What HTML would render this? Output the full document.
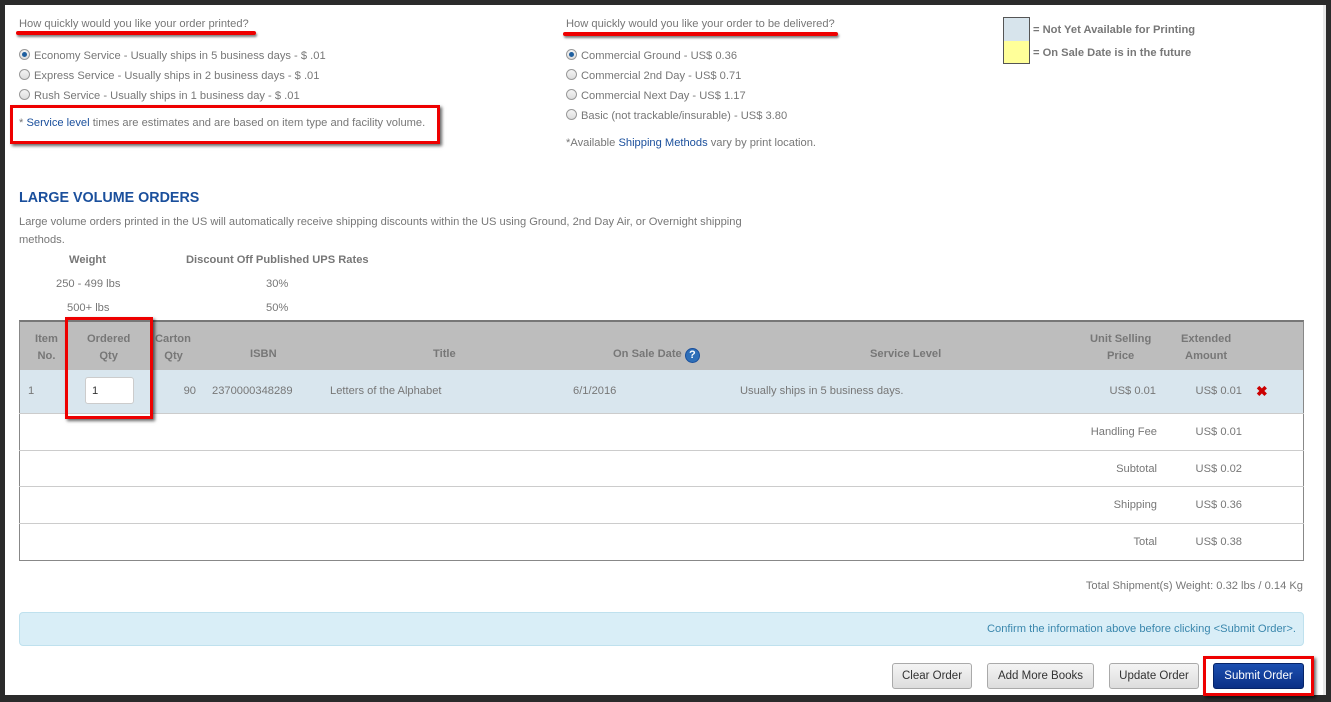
<!DOCTYPE html>
<html><head><meta charset="utf-8"><style>
*{margin:0;padding:0;box-sizing:border-box}
body{width:1331px;height:702px;background:#2b2b2b;position:relative;overflow:hidden;font-family:"Liberation Sans",Arial,sans-serif;font-size:11.15px;color:#777}
#pg{position:absolute;left:5px;top:5px;width:1318px;height:690px;background:#fff}
#strip{position:absolute;left:1323px;top:5px;width:3px;height:690px;background:#e8e8e8}
.a{position:absolute;white-space:nowrap}
.t{margin-top:1px}
.rr{position:absolute;white-space:nowrap;text-align:right;margin-top:1px}
.r{display:inline-block;width:11px;height:11px;border-radius:50%;border:1px solid #999;background:linear-gradient(#f4f4f4,#ddd);vertical-align:-1px;margin-right:4px;position:relative}
.r.on::after{content:"";position:absolute;left:2px;top:2px;width:5px;height:5px;border-radius:50%;background:#1f5f9f}
.ul{position:absolute;height:4px;background:#e00;border-radius:2px;box-shadow:1px 2px 2px rgba(0,0,0,.5)}
.box{position:absolute;border:3px solid #e00;box-shadow:2px 2px 3px rgba(0,0,0,.6)}
a{color:#1a4f9c;text-decoration:none}
.hd{font-weight:bold;color:#777;text-align:center}
.line{position:absolute;left:19px;width:1285px;height:1px;background:#ccc}
.btn{position:absolute;top:663px;height:26px;border:1px solid #aaa;border-radius:3px;background:linear-gradient(#f4f4f4,#ddd);color:#333;text-align:center;line-height:25px;font-size:11.5px}
</style></head><body>
<div id="pg"></div><div id="strip"></div>

<div class="a t" style="left:19px;top:17px">How quickly would you like your order printed?</div>
<div class="ul" style="left:16px;top:31px;width:240px"></div>
<div class="a t" style="left:19px;top:48px"><span class="r on"></span>Economy Service - Usually ships in 5 business days - $ .01</div>
<div class="a t" style="left:19px;top:68px"><span class="r"></span>Express Service - Usually ships in 2 business days - $ .01</div>
<div class="a t" style="left:19px;top:88px"><span class="r"></span>Rush Service - Usually ships in 1 business day - $ .01</div>
<div class="a t" style="left:19px;top:116px">* <a>Service level</a> times are estimates and are based on item type and facility volume.</div>
<div class="box" style="left:10px;top:105px;width:430px;height:39px"></div>

<div class="a t" style="left:566px;top:17px">How quickly would you like your order to be delivered?</div>
<div class="ul" style="left:563px;top:32px;width:275px"></div>
<div class="a t" style="left:566px;top:48px"><span class="r on"></span>Commercial Ground - US$ 0.36</div>
<div class="a t" style="left:566px;top:68px"><span class="r"></span>Commercial 2nd Day - US$ 0.71</div>
<div class="a t" style="left:566px;top:88px"><span class="r"></span>Commercial Next Day - US$ 1.17</div>
<div class="a t" style="left:566px;top:108px"><span class="r"></span>Basic (not trackable/insurable) - US$ 3.80</div>
<div class="a t" style="left:566px;top:136px">*Available <a>Shipping Methods</a> vary by print location.</div>

<div class="a" style="left:1003px;top:17px;width:27px;height:24px;background:#d7e4ec;border:1px solid #555;border-bottom:none"></div>
<div class="a" style="left:1003px;top:41px;width:27px;height:23px;background:#ffff99;border:1px solid #555;border-top:none"></div>
<div class="a t" style="left:1033px;top:23px;font-weight:bold">= Not Yet Available for Printing</div>
<div class="a t" style="left:1033px;top:46px;font-weight:bold">= On Sale Date is in the future</div>

<div class="a t" style="left:19px;top:189px;font-size:14.3px;font-weight:bold;color:#1a4f9c">LARGE VOLUME ORDERS</div>
<div class="a t" style="left:19px;top:215px">Large volume orders printed in the US will automatically receive shipping discounts within the US using Ground, 2nd Day Air, or Overnight shipping</div>
<div class="a t" style="left:19px;top:233px">methods.</div>
<div class="a hd t" style="left:69px;top:253px">Weight</div>
<div class="a hd t" style="left:186px;top:253px">Discount Off Published UPS Rates</div>
<div class="a t" style="left:56px;top:277px">250 - 499 lbs</div>
<div class="a t" style="left:266px;top:277px">30%</div>
<div class="a t" style="left:67px;top:301px">500+ lbs</div>
<div class="a t" style="left:266px;top:301px">50%</div>

<!-- table -->
<div class="a" style="left:19px;top:320px;width:1285px;height:241px;border:1px solid #888;border-top:2px solid #777"></div>
<div class="a" style="left:20px;top:322px;width:1283px;height:48px;background:#bdbdbd"></div>
<div class="a" style="left:20px;top:370px;width:1283px;height:43px;background:#d9e6ee"></div>
<div class="line" style="top:413px"></div><div class="line" style="top:450px"></div><div class="line" style="top:486px"></div><div class="line" style="top:523px"></div>
<div class="a hd t" style="left:35px;top:330px;line-height:17px">Item<br>No.</div>
<div class="a hd t" style="left:87px;top:330px;line-height:17px">Ordered<br>Qty</div>
<div class="a hd t" style="left:155px;top:330px;line-height:17px;text-align:left">Carton<br>&nbsp;&nbsp;&nbsp;Qty</div>
<div class="a hd t" style="left:250px;top:347px">ISBN</div>
<div class="a hd t" style="left:433px;top:347px">Title</div>
<div class="a hd t" style="left:613px;top:347px">On Sale Date <span style="display:inline-block;width:15px;height:15px;border-radius:50%;background:#2f6fb8;border:1px solid #1a4f9c;color:#fff;font-size:11px;line-height:13px;vertical-align:-1px">?</span></div>
<div class="a hd t" style="left:870px;top:347px">Service Level</div>
<div class="a hd t" style="left:1090px;top:330px;line-height:17px">Unit Selling<br>Price</div>
<div class="a hd t" style="left:1181px;top:330px;line-height:17px">Extended<br>Amount</div>

<div class="a t" style="left:28px;top:384px">1</div>
<div class="a" style="left:85px;top:377px;width:49px;height:27px;background:#fff;border:1px solid #ccc;border-radius:3px;color:#333;padding:7px 6px">1</div>
<div class="box" style="left:65px;top:317px;width:88px;height:102px"></div>
<div class="rr" style="right:1135px;top:384px">90</div>
<div class="a t" style="left:212px;top:384px">2370000348289</div>
<div class="a t" style="left:330px;top:384px">Letters of the Alphabet</div>
<div class="a t" style="left:573px;top:384px">6/1/2016</div>
<div class="a t" style="left:740px;top:384px">Usually ships in 5 business days.</div>
<div class="rr" style="right:175px;top:384px">US$ 0.01</div>
<div class="rr" style="right:89px;top:384px">US$ 0.01</div>
<div class="a" style="left:1256px;top:383px;color:#c00;font-weight:bold;font-size:14px">✖</div>

<div class="rr" style="right:174px;top:425px">Handling Fee</div><div class="rr" style="right:89px;top:425px">US$ 0.01</div>
<div class="rr" style="right:174px;top:462px">Subtotal</div><div class="rr" style="right:89px;top:462px">US$ 0.02</div>
<div class="rr" style="right:174px;top:498px">Shipping</div><div class="rr" style="right:89px;top:498px">US$ 0.36</div>
<div class="rr" style="right:174px;top:535px">Total</div><div class="rr" style="right:89px;top:535px">US$ 0.38</div>

<div class="rr" style="right:28px;top:579px">Total Shipment(s) Weight: 0.32 lbs / 0.14 Kg</div>
<div class="a" style="left:19px;top:612px;width:1285px;height:34px;background:#d9eef7;border:1px solid #bfe1ee;border-radius:4px"></div>
<div class="rr" style="right:35px;top:622px;color:#3a87ad">Confirm the information above before clicking &lt;Submit Order&gt;.</div>

<div class="btn" style="left:892px;width:80px">Clear Order</div>
<div class="btn" style="left:987px;width:107px">Add More Books</div>
<div class="btn" style="left:1109px;width:90px">Update Order</div>
<div class="btn" style="left:1213px;width:91px;background:linear-gradient(#1c4fb0,#0a2f85);border-color:#062468;color:#fff">Submit Order</div>
<div class="box" style="left:1203px;top:656px;width:111px;height:40px"></div>
</body></html>
